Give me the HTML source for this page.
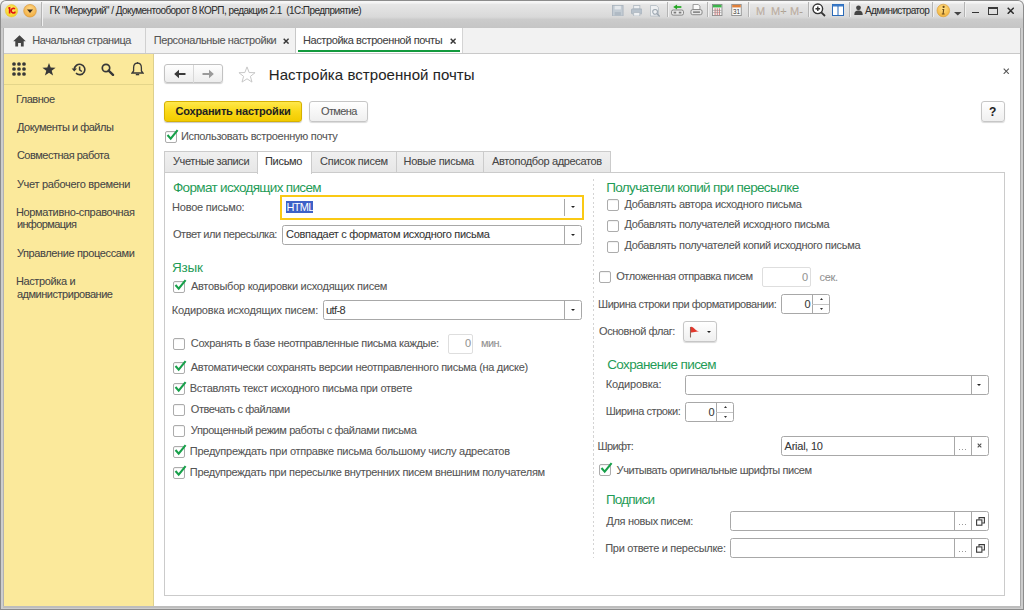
<!DOCTYPE html>
<html><head><meta charset="utf-8">
<style>
*{margin:0;padding:0;box-sizing:border-box}
html,body{width:1024px;height:610px;overflow:hidden;background:#fff}
body{position:relative;font-family:"Liberation Sans",sans-serif;color:#555555;font-size:11px}
.a{position:absolute}
.t{position:absolute;white-space:nowrap;font-size:11px;line-height:13px;letter-spacing:-0.36px;color:#555555;-webkit-text-stroke:0.2px rgba(85,85,85,0.45)}
.h{position:absolute;white-space:nowrap;font-size:13.5px;line-height:16px;letter-spacing:-0.6px;color:#1f9c57}
.cb{position:absolute;width:12px;height:12px;border:1px solid #acacac;border-radius:2px;background:#fff;box-shadow:inset 0 1px 1px rgba(0,0,0,0.06)}
.ck svg{position:absolute;left:0px;top:-3px}
.inp{position:absolute;border:1px solid #a8a8a8;border-radius:2.5px;background:#fff}
.sep{position:absolute;top:0;bottom:0;width:1px;background:#a8a8a8}
.dd{position:absolute;width:0;height:0;border-left:2.5px solid transparent;border-right:2.5px solid transparent;border-top:2.5px solid #222}
</style></head><body>
<div class="a" style="left:0;top:0;width:6px;height:6px;background:#f4f4f4"></div>
<div class="a" style="left:1018px;top:0;width:6px;height:6px;background:#f4f4f4"></div>
<div class="a" style="left:0;top:0;width:1024px;height:610px;background:#8c8c8c;border-radius:6px 6px 0 0"></div>
<div class="a" style="left:1px;top:20px;width:1022px;height:589px;background:#cdcdcd"></div>
<div class="a" style="left:3px;top:27px;width:1px;height:580px;background:#b2b2b2"></div>
<div class="a" style="left:1020px;top:27px;width:1px;height:580px;background:#a8a8a8"></div>
<div class="a" style="left:3px;top:606px;width:1018px;height:2px;background:#bdbdbd"></div>
<div class="a" style="left:1px;top:1px;width:1022px;height:27px;background:linear-gradient(#f8f8f8 0px,#f4f4f4 2px,#e6e6e6 3.5px,#d9d9d9 16px,#cbcbcb 18.5px,#c5c5c5 27px);border-radius:5px 5px 0 0"></div>
<div class="t" style="left:49.5px;top:5px;font-size:10px;line-height:12px;letter-spacing:-0.56px;color:#2b2b2b">ГК "Меркурий" / Документооборот 8 КОРП, редакция 2.1 &nbsp;(1С:Предприятие)</div>
<div class="a" style="left:4px;top:28px;width:1016px;height:26px;background:#f2f2f2;border-bottom:1px solid #c9c9c9"></div>
<div class="a" style="left:4px;top:54px;width:1016px;height:552px;background:#fff"></div>
<div class="a" style="left:4px;top:54px;width:150px;height:552px;background:#fbe99b;border-right:1px solid #ddd08e"></div>
<div class="a" style="left:4px;top:84px;width:149px;height:1px;background:#e4d58a"></div>
<div class="a" style="left:145px;top:28px;width:1px;height:25px;background:#d0d0d0"></div>
<div class="a" style="left:295px;top:28px;width:168px;height:25px;background:#fff;border-left:1px solid #c8c8c8;border-right:1px solid #d4d4d4"></div>
<div class="a" style="left:298px;top:50px;width:162px;height:2px;background:#139a3e"></div>
<svg class="a" style="left:13px;top:35px" width="13" height="12" viewBox="0 0 13 12"><path d="M6.5 0.3 L12.8 6.2 L10.7 6.2 L10.7 11.5 L7.9 11.5 L7.9 8 L5.1 8 L5.1 11.5 L2.3 11.5 L2.3 6.2 L0.2 6.2 Z" fill="#454545"/></svg>
<div class="t" style="left:32.3px;top:33.9px;letter-spacing:-0.429px;">Начальная страница</div>
<div class="t" style="left:153.7px;top:33.9px;letter-spacing:-0.402px;">Персональные настройки</div>
<svg class="a" style="left:282.5px;top:37.7px" width="6.3" height="6.3" viewBox="0 0 6.3 6.3"><path d="M0.7 0.7 L5.6 5.6 M5.6 0.7 L0.7 5.6" stroke="#3a3a3a" stroke-width="1.5"/></svg>
<div class="t" style="left:303px;top:33.9px;letter-spacing:-0.41px;color:#404040">Настройка встроенной почты</div>
<svg class="a" style="left:449.5px;top:37.7px" width="6.3" height="6.3" viewBox="0 0 6.3 6.3"><path d="M0.7 0.7 L5.6 5.6 M5.6 0.7 L0.7 5.6" stroke="#3a3a3a" stroke-width="1.5"/></svg>
<svg class="a" style="left:12px;top:62px" width="14" height="14" viewBox="0 0 14 14" fill="#383838"><circle cx="2" cy="2" r="1.85"/><circle cx="7" cy="2" r="1.85"/><circle cx="12" cy="2" r="1.85"/><circle cx="2" cy="7" r="1.85"/><circle cx="7" cy="7" r="1.85"/><circle cx="12" cy="7" r="1.85"/><circle cx="2" cy="12" r="1.85"/><circle cx="7" cy="12" r="1.85"/><circle cx="12" cy="12" r="1.85"/></svg>
<svg class="a" style="left:42px;top:63px" width="14" height="13" viewBox="0 0 14 13"><path d="M7 0 L8.7 4.6 L13.6 4.7 L9.7 7.7 L11.1 12.5 L7 9.7 L2.9 12.5 L4.3 7.7 L0.4 4.7 L5.3 4.6 Z" fill="#383838"/></svg>
<svg class="a" style="left:71px;top:63px" width="15" height="13" viewBox="0 0 15 13"><path d="M3.4 6.3 A5.2 5.2 0 1 1 5 10.2" fill="none" stroke="#383838" stroke-width="1.6"/><path d="M0.6 5.4 L6 5.4 L3.3 8.6 Z" fill="#383838"/><path d="M8.6 3.4 L8.6 6.8 L10.9 8.5" fill="none" stroke="#383838" stroke-width="1.5"/></svg>
<svg class="a" style="left:101px;top:63px" width="14" height="13" viewBox="0 0 14 13"><circle cx="5" cy="5" r="3.7" fill="none" stroke="#383838" stroke-width="1.7"/><path d="M7.6 7.6 L12 11.8" stroke="#383838" stroke-width="2.4" stroke-linecap="round"/></svg>
<svg class="a" style="left:131px;top:62px" width="13" height="14" viewBox="0 0 13 14"><path d="M6.5 1.2 C3.8 1.2 2.6 3.4 2.6 6 L2.6 9 L1 11 L12 11 L10.4 9 L10.4 6 C10.4 3.4 9.2 1.2 6.5 1.2 Z" fill="none" stroke="#383838" stroke-width="1.3"/><path d="M4.8 12.6 L8.2 12.6" stroke="#383838" stroke-width="1.4"/><circle cx="6.5" cy="0.9" r="0.8" fill="#383838"/></svg>
<div class="t" style="left:15.899999999999999px;top:92.7px;letter-spacing:-0.483px;color:#444">Главное</div>
<div class="t" style="left:16.9px;top:121.3px;letter-spacing:-0.475px;color:#444">Документы и файлы</div>
<div class="t" style="left:16.9px;top:149.4px;letter-spacing:-0.494px;color:#444">Совместная работа</div>
<div class="t" style="left:16.9px;top:177.7px;letter-spacing:-0.31px;color:#444">Учет рабочего времени</div>
<div class="t" style="left:15.899999999999999px;top:205.9px;letter-spacing:-0.325px;color:#444">Нормативно-справочная</div>
<div class="t" style="left:16.9px;top:218.4px;letter-spacing:-0.62px;color:#444">информация</div>
<div class="t" style="left:16.9px;top:246.9px;letter-spacing:-0.375px;color:#444">Управление процессами</div>
<div class="t" style="left:15.899999999999999px;top:275.0px;letter-spacing:-0.36px;color:#444">Настройка и</div>
<div class="t" style="left:16.9px;top:287.5px;letter-spacing:-0.475px;color:#444">администрирование</div>
<div class="a" style="left:164px;top:63.5px;width:59px;height:19.5px;border:1px solid #c2c2c2;border-radius:3px;background:linear-gradient(#fefefe,#ededed);box-shadow:0 1px 1px rgba(0,0,0,0.18)"></div>
<div class="a" style="left:193px;top:64.5px;width:1px;height:18px;background:#d8d8d8"></div>
<svg class="a" style="left:173.5px;top:68.5px" width="12" height="10" viewBox="0 0 12 10"><path d="M3 5 L11.5 5" stroke="#3a3a3a" stroke-width="2"/><path d="M0.2 5 L5 0.8 L5 9.2 Z" fill="#3a3a3a"/></svg>
<svg class="a" style="left:202px;top:68.5px" width="12" height="10" viewBox="0 0 12 10"><path d="M0.5 5 L9 5" stroke="#9a9a9a" stroke-width="2"/><path d="M11.8 5 L7 0.8 L7 9.2 Z" fill="#9a9a9a"/></svg>
<svg class="a" style="left:238px;top:66px" width="18" height="17" viewBox="0 0 20 19"><path d="M10 1 L12.4 7.3 L19 7.5 L13.8 11.6 L15.6 18 L10 14.3 L4.4 18 L6.2 11.6 L1 7.5 L7.6 7.3 Z" fill="none" stroke="#c6c6c6" stroke-width="1.1"/></svg>
<div class="t" style="left:268.8px;top:65.7px;font-size:15px;line-height:18px;letter-spacing:0.06px;color:#1e1e1e">Настройка встроенной почты</div>
<svg class="a" style="left:1003px;top:67.8px" width="6.5" height="6.5" viewBox="0 0 6.5 6.5"><path d="M0.7 0.7 L5.8 5.8 M5.8 0.7 L0.7 5.8" stroke="#555" stroke-width="1.1"/></svg>
<div class="a" style="left:164px;top:101px;width:138px;height:21px;border:1px solid #d6b100;border-radius:3px;background:linear-gradient(#ffe84c,#fad816 50%,#f2cb00);box-shadow:0 1px 1px rgba(0,0,0,0.22)"></div>
<div class="t" style="left:175.5px;top:105.1px;font-weight:bold;letter-spacing:-0.19px;color:#1e1e1e">Сохранить настройки</div>
<div class="a" style="left:309px;top:101px;width:59px;height:21px;border:1px solid #c6c6c6;border-radius:3px;background:linear-gradient(#ffffff,#efefef);box-shadow:0 1px 1px rgba(0,0,0,0.15)"></div>
<div class="t" style="left:321px;top:105.1px;letter-spacing:-0.62px;color:#555">Отмена</div>
<div class="a" style="left:981px;top:101px;width:24px;height:21px;border:1px solid #c6c6c6;border-radius:3px;background:linear-gradient(#ffffff,#efefef);box-shadow:0 1px 1px rgba(0,0,0,0.15)"></div>
<div class="t" style="left:989px;top:105.5px;font-weight:bold;font-size:12px;color:#222;letter-spacing:0">?</div>
<div class="cb ck" style="left:165px;top:131px"><svg width="13" height="12" viewBox="0 0 13 12"><path d="M1.5 6 L4.7 9.6 L11.6 1.2" fill="none" stroke="#17a04a" stroke-width="2.1"/></svg></div>
<div class="t" style="left:180.9px;top:130.3px;letter-spacing:-0.314px;">Использовать встроенную почту</div>
<div class="a" style="left:164px;top:151px;width:95px;height:22px;background:linear-gradient(#f0f0f0,#e6e6e6);border:1px solid #cbcbcb;border-bottom:none"></div>
<div class="t" style="left:173px;top:155.0px;letter-spacing:-0.385px;color:#444">Учетные записи</div>
<div class="a" style="left:311px;top:151px;width:86px;height:22px;background:linear-gradient(#f0f0f0,#e6e6e6);border:1px solid #cbcbcb;border-bottom:none"></div>
<div class="t" style="left:320px;top:155.0px;letter-spacing:-0.255px;color:#444">Список писем</div>
<div class="a" style="left:396px;top:151px;width:88px;height:22px;background:linear-gradient(#f0f0f0,#e6e6e6);border:1px solid #cbcbcb;border-bottom:none"></div>
<div class="t" style="left:403.5px;top:155.0px;letter-spacing:-0.3px;color:#444">Новые письма</div>
<div class="a" style="left:483px;top:151px;width:128px;height:22px;background:linear-gradient(#f0f0f0,#e6e6e6);border:1px solid #cbcbcb;border-bottom:none"></div>
<div class="t" style="left:492px;top:155.0px;letter-spacing:-0.353px;color:#444">Автоподбор адресатов</div>
<div class="a" style="left:164px;top:172px;width:841px;height:424px;border:1px solid #cbcbcb;background:#fff"></div>
<div class="a" style="left:257px;top:151px;width:55px;height:23px;background:#fff;border:1px solid #cbcbcb;border-bottom:none"></div>
<div class="t" style="left:265px;top:154.9px;letter-spacing:-0.3px;color:#333">Письмо</div>
<div class="a" style="left:593px;top:179px;width:1px;height:379px;background:repeating-linear-gradient(#d4d4d4 0px,#d4d4d4 2px,rgba(255,255,255,0) 2px,rgba(255,255,255,0) 4.5px)"></div>
<div class="h" style="left:173px;top:179.7px;letter-spacing:-0.667px;">Формат исходящих писем</div>
<div class="t" style="left:172px;top:200.7px;letter-spacing:-0.208px;">Новое письмо:</div>
<div class="a" style="left:280px;top:195px;width:304px;height:25px;border:2px solid #fac914;background:#fff"></div>
<div class="a" style="left:564px;top:199px;width:1px;height:17px;background:#a8a8a8"></div>
<div class="dd" style="left:570.5px;top:206px"></div>
<div class="a" style="left:286px;top:201px;width:27px;height:12px;background:#3d61c8"></div>
<div class="t" style="left:286.5px;top:200.7px;letter-spacing:-0.7px;color:#fff;-webkit-text-stroke:0">HTML</div>
<div class="t" style="left:173px;top:228.4px;letter-spacing:-0.468px;">Ответ или пересылка:</div>
<div class="inp" style="left:282px;top:225px;width:300px;height:20px;"><div class="sep" style="left:281px"></div></div>
<div class="dd" style="left:570.5px;top:234px"></div>
<div class="t" style="left:286px;top:228.4px;letter-spacing:-0.303px;color:#333">Совпадает с форматом исходного письма</div>
<div class="h" style="left:172px;top:259.7px;letter-spacing:-0.233px;">Язык</div>
<div class="cb ck" style="left:173px;top:281px"><svg width="13" height="12" viewBox="0 0 13 12"><path d="M1.5 6 L4.7 9.6 L11.6 1.2" fill="none" stroke="#17a04a" stroke-width="2.1"/></svg></div>
<div class="t" style="left:190.9px;top:279.7px;letter-spacing:-0.253px;">Автовыбор кодировки исходящих писем</div>
<div class="t" style="left:171.7px;top:303.7px;letter-spacing:-0.16px;">Кодировка исходящих писем:</div>
<div class="inp" style="left:323px;top:300px;width:259px;height:20px;"><div class="sep" style="left:240px"></div></div>
<div class="dd" style="left:570.5px;top:309px"></div>
<div class="t" style="left:326px;top:303.7px;letter-spacing:-0.6px;color:#333">utf-8</div>
<div class="cb" style="left:173px;top:338px"></div>
<div class="t" style="left:190.8px;top:336.7px;letter-spacing:-0.336px;">Сохранять в базе неотправленные письма каждые:</div>
<div class="cb ck" style="left:173px;top:362px"><svg width="13" height="12" viewBox="0 0 13 12"><path d="M1.5 6 L4.7 9.6 L11.6 1.2" fill="none" stroke="#17a04a" stroke-width="2.1"/></svg></div>
<div class="t" style="left:190.8px;top:360.7px;letter-spacing:-0.302px;">Автоматически сохранять версии неотправленного письма (на диске)</div>
<div class="cb ck" style="left:173px;top:383px"><svg width="13" height="12" viewBox="0 0 13 12"><path d="M1.5 6 L4.7 9.6 L11.6 1.2" fill="none" stroke="#17a04a" stroke-width="2.1"/></svg></div>
<div class="t" style="left:189.8px;top:381.7px;letter-spacing:-0.281px;">Вставлять текст исходного письма при ответе</div>
<div class="cb" style="left:173px;top:404px"></div>
<div class="t" style="left:190.8px;top:402.7px;letter-spacing:-0.429px;">Отвечать с файлами</div>
<div class="cb" style="left:173px;top:425px"></div>
<div class="t" style="left:190.8px;top:423.7px;letter-spacing:-0.405px;">Упрощенный режим работы с файлами письма</div>
<div class="cb ck" style="left:173px;top:446px"><svg width="13" height="12" viewBox="0 0 13 12"><path d="M1.5 6 L4.7 9.6 L11.6 1.2" fill="none" stroke="#17a04a" stroke-width="2.1"/></svg></div>
<div class="t" style="left:189.8px;top:444.7px;letter-spacing:-0.253px;">Предупреждать при отправке письма большому числу адресатов</div>
<div class="cb ck" style="left:173px;top:467px"><svg width="13" height="12" viewBox="0 0 13 12"><path d="M1.5 6 L4.7 9.6 L11.6 1.2" fill="none" stroke="#17a04a" stroke-width="2.1"/></svg></div>
<div class="t" style="left:189.8px;top:465.7px;letter-spacing:-0.303px;">Предупреждать при пересылке внутренних писем внешним получателям</div>
<div class="a" style="left:447.5px;top:334px;width:25px;height:20px;border:1px solid #dedede;border-radius:2px;background:#fff"></div>
<div class="t" style="left:465px;top:336.9px;color:#9a9a9a">0</div>
<div class="t" style="left:481px;top:336.9px;letter-spacing:-0.6px;color:#9a9a9a">мин.</div>
<div class="h" style="left:606.2px;top:179.6px;letter-spacing:-0.641px;">Получатели копий при пересылке</div>
<div class="cb" style="left:607.2px;top:199px"></div>
<div class="t" style="left:624.4px;top:197.7px;letter-spacing:-0.303px;">Добавлять автора исходного письма</div>
<div class="cb" style="left:607.2px;top:219.5px"></div>
<div class="t" style="left:624.4px;top:218.2px;letter-spacing:-0.314px;">Добавлять получателей исходного письма</div>
<div class="cb" style="left:607.2px;top:240.5px"></div>
<div class="t" style="left:624.4px;top:239.2px;letter-spacing:-0.305px;">Добавлять получателей копий исходного письма</div>
<div class="cb" style="left:599px;top:271px"></div>
<div class="t" style="left:616.2px;top:269.7px;letter-spacing:-0.425px;">Отложенная отправка писем</div>
<div class="a" style="left:762px;top:267px;width:49px;height:20px;border:1px solid #dedede;border-radius:2px;background:#fff"></div>
<div class="t" style="left:802px;top:270.7px;color:#9a9a9a">0</div>
<div class="t" style="left:819.5px;top:270.7px;letter-spacing:-0.333px;color:#9a9a9a">сек.</div>
<div class="t" style="left:598px;top:297.7px;letter-spacing:-0.45px;">Ширина строки при форматировании:</div>
<div class="inp" style="left:781px;top:294px;width:49px;height:20px;"><div class="sep" style="left:30px"></div></div>
<div class="a" style="left:812px;top:304.0px;width:17px;height:1px;background:#c4c4c4"></div>
<svg class="a" style="left:819.5px;top:298px" width="3" height="2" viewBox="0 0 3 2"><path d="M0 2 H3 L1.5 0 Z" fill="#333"/></svg>
<svg class="a" style="left:819.5px;top:308px" width="3" height="2" viewBox="0 0 3 2"><path d="M0 0 H3 L1.5 2 Z" fill="#333"/></svg>
<div class="t" style="left:804.5px;top:297.7px;color:#333">0</div>
<div class="t" style="left:599px;top:324.7px;letter-spacing:-0.431px;">Основной флаг:</div>
<div class="a" style="left:683px;top:321px;width:34px;height:21px;border:1px solid #c6c6c6;border-radius:3px;background:linear-gradient(#ffffff,#efefef);box-shadow:0 1px 1px rgba(0,0,0,0.15)"></div>
<svg class="a" style="left:689px;top:326px" width="13" height="12" viewBox="0 0 13 12"><path d="M1.5 1 L1.5 11.5" stroke="#8a6a60" stroke-width="1.1"/><path d="M1.8 0.8 C3.5 0.6 4.5 1.8 6 3.2 C7.5 4.6 9.5 5.4 11.6 5.6 C9.4 5.6 7.5 5.6 5.8 6.1 C4.5 6.5 3 6.6 1.8 6.5 Z" fill="#e2382c"/></svg>
<div class="dd" style="left:707px;top:331px"></div>
<div class="h" style="left:607.2px;top:356.9px;letter-spacing:-0.613px;">Сохранение писем</div>
<div class="t" style="left:605.7px;top:378.0px;letter-spacing:-0.133px;">Кодировка:</div>
<div class="inp" style="left:685px;top:375px;width:304px;height:20px;"><div class="sep" style="left:285px"></div></div>
<div class="dd" style="left:977px;top:384px"></div>
<div class="t" style="left:605.7px;top:405.3px;letter-spacing:-0.423px;">Ширина строки:</div>
<div class="inp" style="left:685px;top:402px;width:49px;height:20px;"><div class="sep" style="left:30px"></div></div>
<div class="a" style="left:716px;top:412.0px;width:17px;height:1px;background:#c4c4c4"></div>
<svg class="a" style="left:723.5px;top:406px" width="3" height="2" viewBox="0 0 3 2"><path d="M0 2 H3 L1.5 0 Z" fill="#333"/></svg>
<svg class="a" style="left:723.5px;top:416px" width="3" height="2" viewBox="0 0 3 2"><path d="M0 0 H3 L1.5 2 Z" fill="#333"/></svg>
<div class="t" style="left:708.5px;top:405.7px;color:#333">0</div>
<div class="t" style="left:597.6px;top:439.7px;letter-spacing:-0.62px;">Шрифт:</div>
<div class="inp" style="left:781px;top:436px;width:208px;height:20px;"><div class="sep" style="left:172px"></div><div class="sep" style="left:189px"></div></div>
<div class="t" style="left:784.6px;top:439.7px;letter-spacing:-0.25px;color:#333">Arial, 10</div>
<div class="a" style="left:958.8px;top:449px;width:1px;height:1px;background:#999;box-shadow:3px 0 0 #999,6px 0 0 #999"></div>
<svg class="a" style="left:976.6px;top:443.3px" width="5" height="5" viewBox="0 0 5 5"><path d="M0.7 0.7 L4.3 4.3 M4.3 0.7 L0.7 4.3" stroke="#505050" stroke-width="1.1"/></svg>
<div class="cb ck" style="left:599px;top:464px"><svg width="13" height="12" viewBox="0 0 13 12"><path d="M1.5 6 L4.7 9.6 L11.6 1.2" fill="none" stroke="#17a04a" stroke-width="2.1"/></svg></div>
<div class="t" style="left:616.6px;top:463.7px;letter-spacing:-0.444px;">Учитывать оригинальные шрифты писем</div>
<div class="h" style="left:605.9px;top:491.6px;letter-spacing:-0.783px;">Подписи</div>
<div class="t" style="left:606.25px;top:514.7px;letter-spacing:-0.303px;">Для новых писем:</div>
<div class="inp" style="left:730px;top:511px;width:259px;height:20px;"><div class="sep" style="left:223px"></div><div class="sep" style="left:240px"></div></div>
<div class="a" style="left:958.8px;top:524px;width:1px;height:1px;background:#999;box-shadow:3px 0 0 #999,6px 0 0 #999"></div>
<svg class="a" style="left:976px;top:517px" width="9" height="9" viewBox="0 0 9 9"><path d="M3 2.6 V0.6 H8.4 V6 H6.2" fill="none" stroke="#3a3a3a" stroke-width="1.1"/><rect x="0.6" y="2.9" width="5.3" height="5.3" fill="none" stroke="#3a3a3a" stroke-width="1.1"/></svg>
<div class="t" style="left:605.25px;top:541.7px;letter-spacing:-0.293px;">При ответе и пересылке:</div>
<div class="inp" style="left:730px;top:538px;width:259px;height:20px;"><div class="sep" style="left:223px"></div><div class="sep" style="left:240px"></div></div>
<div class="a" style="left:958.8px;top:551px;width:1px;height:1px;background:#999;box-shadow:3px 0 0 #999,6px 0 0 #999"></div>
<svg class="a" style="left:976px;top:544px" width="9" height="9" viewBox="0 0 9 9"><path d="M3 2.6 V0.6 H8.4 V6 H6.2" fill="none" stroke="#3a3a3a" stroke-width="1.1"/><rect x="0.6" y="2.9" width="5.3" height="5.3" fill="none" stroke="#3a3a3a" stroke-width="1.1"/></svg>
<svg class="a" style="left:4px;top:3px" width="16" height="16" viewBox="0 0 16 16"><defs><radialGradient id="g1" cx="0.45" cy="0.4" r="0.6"><stop offset="0" stop-color="#fff27a"/><stop offset="1" stop-color="#f2cf1a"/></radialGradient></defs><circle cx="7.5" cy="7.8" r="6.2" fill="url(#g1)" stroke="#e8c64a" stroke-width="0.6"/><path d="M4.3 5.2 L5.6 4.8 L5.6 10.6 M7.2 7.6 C7.2 5.2 9.8 4.6 10.8 6.2 M7.2 7.6 C7.2 10 9.6 10.6 10.8 9.4 L11.6 9.4" fill="none" stroke="#e01010" stroke-width="1.6"/></svg>
<svg class="a" style="left:22px;top:3px" width="16" height="16" viewBox="0 0 16 16"><defs><radialGradient id="g2" cx="0.5" cy="0.35" r="0.7"><stop offset="0" stop-color="#ffd98a"/><stop offset="1" stop-color="#f0a838"/></radialGradient></defs><circle cx="8" cy="7.8" r="6.3" fill="url(#g2)" stroke="#d9983a" stroke-width="0.7"/><path d="M5 6.5 L11 6.5 L8 10 Z" fill="#3a2a1a"/></svg>
<div class="a" style="left:41px;top:2px;width:1px;height:24px;background:#b4b4b4;box-shadow:1px 0 0 #f0f0f0"></div>
<svg class="a" style="left:612px;top:4.5px" width="11.5" height="11.5" viewBox="0 0 13 13"><rect x="0.5" y="0.5" width="12" height="12" fill="#c3ccd4" stroke="#aab4be"/><rect x="3" y="1" width="7" height="4" fill="#e4e8ec"/><rect x="3" y="8" width="7" height="4" fill="#b0bac4"/></svg>
<svg class="a" style="left:630.5px;top:4.5px" width="11.5" height="11.5" viewBox="0 0 13 13"><rect x="3" y="0.5" width="7" height="4" fill="#eef0f2" stroke="#b4bcc4"/><rect x="0.5" y="4.5" width="12" height="5.5" rx="1" fill="#b8c2cc" stroke="#a8b2bc"/><rect x="3" y="8.5" width="7" height="4" fill="#eef0f2" stroke="#b4bcc4"/></svg>
<svg class="a" style="left:650px;top:4.5px" width="11" height="12" viewBox="0 0 13 14"><path d="M0.5 0.5 H7.5 L10 3 V13 H0.5 Z" fill="#eef0f2" stroke="#b4bcc4"/><circle cx="6" cy="8" r="2.8" fill="none" stroke="#9aa4ae" stroke-width="1.2"/><path d="M8 10 L11.5 13.5" stroke="#9aa4ae" stroke-width="1.5"/></svg>
<div class="a" style="left:667px;top:2px;width:1px;height:15px;background:#b4b4b4;box-shadow:1px 0 0 #f0f0f0"></div>
<svg class="a" style="left:671px;top:4px" width="13" height="12" viewBox="0 0 15 14"><rect x="0.5" y="7" width="14" height="6" rx="2" fill="#e8e8e8" stroke="#7a7a7a"/><rect x="3" y="9" width="3" height="2" fill="#7a7a7a"/><rect x="9" y="9" width="3" height="2" fill="#7a7a7a"/><path d="M7 0.5 L2.5 3.5 L7 6.5 Z" fill="#22a822"/><rect x="6" y="2.5" width="6" height="2" fill="#22a822"/></svg>
<svg class="a" style="left:689.5px;top:4px" width="13" height="12" viewBox="0 0 14 14"><path d="M3 0.5 H9 L11 2.5 V7 H3 Z" fill="#fafafa" stroke="#8a8a8a"/><rect x="0.5" y="6.5" width="13" height="6" rx="2" fill="#e8e8e8" stroke="#7a7a7a"/><rect x="3" y="8.5" width="8" height="2" fill="#8a8a8a"/></svg>
<div class="a" style="left:707px;top:2px;width:1px;height:15px;background:#b4b4b4;box-shadow:1px 0 0 #f0f0f0"></div>
<svg class="a" style="left:712px;top:4px" width="10.5" height="12" viewBox="0 0 12 14"><rect x="0.5" y="0.5" width="11" height="13" fill="#f4f4f4" stroke="#8a8a8a"/><rect x="1" y="1" width="10" height="3" fill="#3cb44a"/><path d="M3.5 5 V13 M6 5 V13 M8.5 5 V13" stroke="#c04040" stroke-width="0.8"/><path d="M1 7.5 H11 M1 10 H11" stroke="#8a8a8a" stroke-width="0.6"/></svg>
<svg class="a" style="left:731px;top:4px" width="11" height="12" viewBox="0 0 12 14"><rect x="0.5" y="0.5" width="11" height="13" fill="#fafafa" stroke="#8a8a8a"/><rect x="1" y="1" width="10" height="3" fill="#e0803a"/><text x="6" y="12" font-family="Liberation Sans" font-size="7.5" text-anchor="middle" fill="#333">31</text></svg>
<div class="a" style="left:748px;top:2px;width:1px;height:15px;background:#b4b4b4;box-shadow:1px 0 0 #f0f0f0"></div>
<div class="t" style="left:756px;top:5px;font-size:11px;letter-spacing:0;color:#c9b8a8">M</div>
<div class="t" style="left:771px;top:5px;font-size:11px;letter-spacing:0;color:#c9b8a8">M+</div>
<div class="t" style="left:790px;top:5px;font-size:11px;letter-spacing:0;color:#c9b8a8">M-</div>
<div class="a" style="left:808px;top:2px;width:1px;height:15px;background:#b4b4b4;box-shadow:1px 0 0 #f0f0f0"></div>
<svg class="a" style="left:812px;top:3px" width="14" height="14" viewBox="0 0 14 14"><circle cx="5.8" cy="5.8" r="4.8" fill="#fff" stroke="#333" stroke-width="1.4"/><path d="M3.5 5.8 H8.1 M5.8 3.5 V8.1" stroke="#333" stroke-width="1.4"/><path d="M9.3 9.3 L13 13" stroke="#333" stroke-width="1.8"/></svg>
<svg class="a" style="left:832px;top:4px" width="12" height="12" viewBox="0 0 12 12"><rect x="0.5" y="0.5" width="11" height="11" fill="#fff" stroke="#2a6ab8"/><rect x="0.5" y="0.5" width="11" height="2" fill="#3a7ac8"/><path d="M6 2 V11.5" stroke="#2a6ab8"/></svg>
<div class="a" style="left:849px;top:2px;width:1px;height:15px;background:#b4b4b4;box-shadow:1px 0 0 #f0f0f0"></div>
<svg class="a" style="left:854px;top:5px" width="9" height="10" viewBox="0 0 9 10"><circle cx="4.5" cy="2.8" r="2.4" fill="#444"/><path d="M0.3 10 C0.3 6.5 2 5.5 4.5 5.5 C7 5.5 8.7 6.5 8.7 10 Z" fill="#444"/></svg>
<div class="t" style="left:865px;top:5px;font-size:10px;line-height:12px;letter-spacing:-0.62px;color:#2b2b2b">Администратор</div>
<div class="a" style="left:932px;top:2px;width:1px;height:15px;background:#b4b4b4;box-shadow:1px 0 0 #f0f0f0"></div>
<svg class="a" style="left:936px;top:3px" width="15" height="15" viewBox="0 0 15 15"><defs><radialGradient id="g3" cx="0.5" cy="0.35" r="0.7"><stop offset="0" stop-color="#ffe08a"/><stop offset="1" stop-color="#f2b033"/></radialGradient></defs><circle cx="7.3" cy="7.5" r="6.3" fill="url(#g3)" stroke="#dba040" stroke-width="0.7"/><circle cx="7.6" cy="3.9" r="1.1" fill="#6a4a1a"/><path d="M6.2 6 H8.3 L7.7 10.6 H8.6 V11.4 H5.8 V10.6 H6.6 L7 6.8 H6.1 Z" fill="#6a4a1a"/></svg>
<svg class="a" style="left:954px;top:12px" width="8" height="4" viewBox="0 0 8 4"><path d="M0 0 H7.5 L3.75 3.5 Z" fill="#444"/></svg>
<div class="a" style="left:964px;top:2px;width:1px;height:15px;background:#b4b4b4;box-shadow:1px 0 0 #f0f0f0"></div>
<div class="a" style="left:972px;top:11.5px;width:6.5px;height:1.6px;background:#333"></div>
<div class="a" style="left:988px;top:6.5px;width:10px;height:8.5px;border:1.2px solid #3a3a3a;border-top-width:2px"></div>
<svg class="a" style="left:1006.8px;top:6.5px" width="7.5" height="7.5" viewBox="0 0 7.5 7.5"><path d="M0.7 0.7 L6.8 6.8 M6.8 0.7 L0.7 6.8" stroke="#2a2a2a" stroke-width="1.5"/></svg>
</body></html>
